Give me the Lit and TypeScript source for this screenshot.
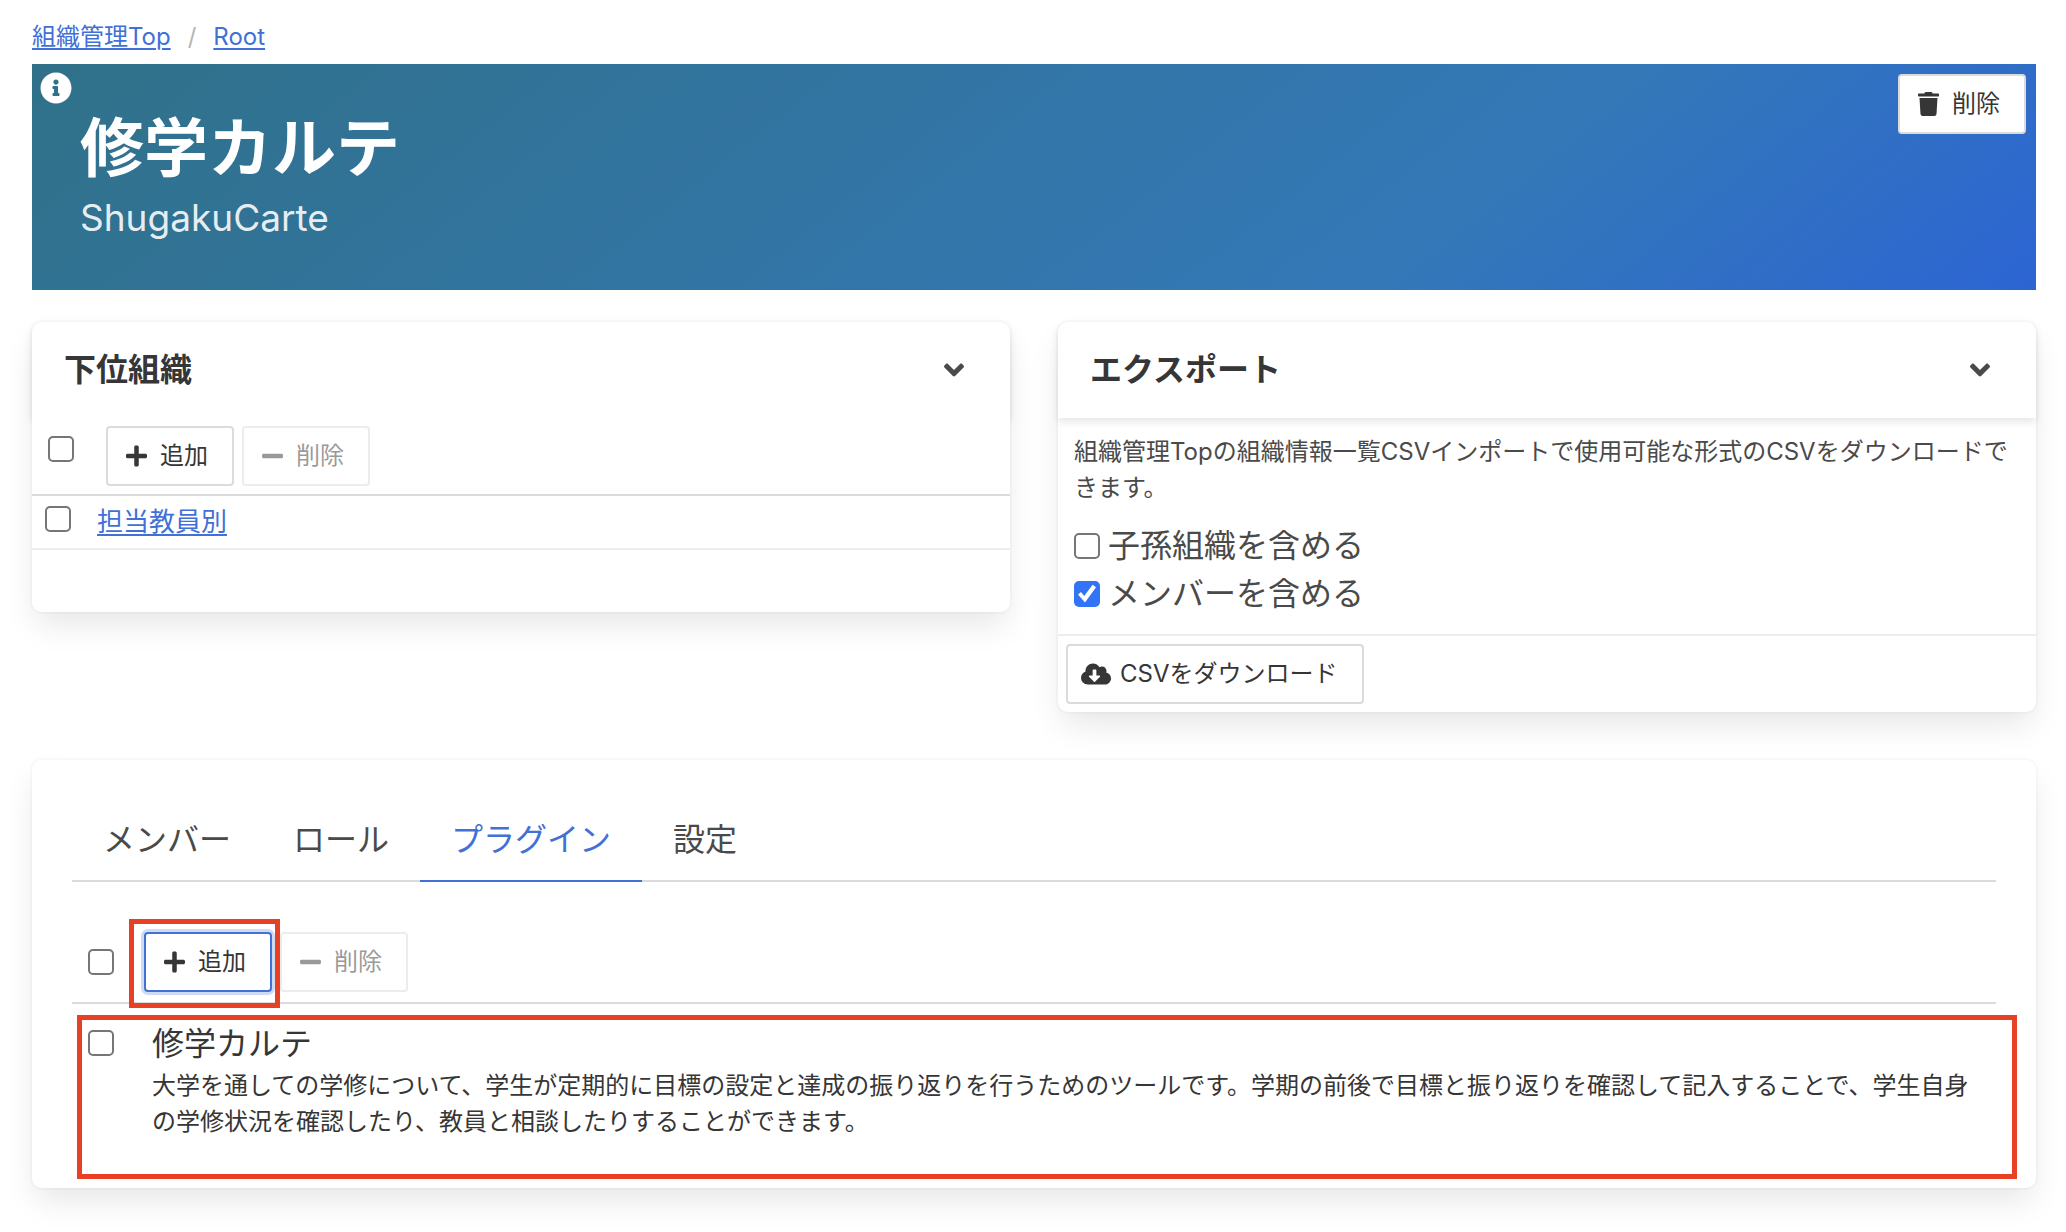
import { LitElement, html, css, svg } from "lit";
import { customElement, property, state } from "lit/decorators.js";
import { classMap } from "lit/directives/class-map.js";

const ICONS: Record<string, { width: number; path: string }> = {
  plus: {
    width: 448,
    path: "M416 208H272V64c0-17.67-14.33-32-32-32h-32c-17.67 0-32 14.33-32 32v144H32c-17.67 0-32 14.33-32 32v32c0 17.67 14.33 32 32 32h144v144c0 17.67 14.33 32 32 32h32c17.67 0 32-14.33 32-32V304h144c17.67 0 32-14.33 32-32v-32c0-17.67-14.33-32-32-32z",
  },
  minus: {
    width: 448,
    path: "M416 208H32c-17.67 0-32 14.33-32 32v32c0 17.67 14.33 32 32 32h384c17.67 0 32-14.33 32-32v-32c0-17.67-14.33-32-32-32z",
  },
  trash: {
    width: 448,
    path: "M432 32H312l-9.4-18.7A24 24 0 0 0 281.1 0H166.8a23.72 23.72 0 0 0-21.4 13.3L136 32H16A16 16 0 0 0 0 48v32a16 16 0 0 0 16 16h416a16 16 0 0 0 16-16V48a16 16 0 0 0-16-16zM32 128l21.2 339a48 48 0 0 0 47.9 45h245.8a48 48 0 0 0 47.9-45L416 128z",
  },
  info: {
    width: 512,
    path: "M256 8C119.043 8 8 119.083 8 256c0 136.997 111.043 248 248 248s248-111.003 248-248C504 119.083 392.957 8 256 8zm0 110c23.196 0 42 18.804 42 42s-18.804 42-42 42-42-18.804-42-42 18.804-42 42-42zm56 254c0 6.627-5.373 12-12 12h-88c-6.627 0-12-5.373-12-12v-24c0-6.627 5.373-12 12-12h12v-64h-12c-6.627 0-12-5.373-12-12v-24c0-6.627 5.373-12 12-12h64c6.627 0 12 5.373 12 12v100h12c6.627 0 12 5.373 12 12v24z",
  },
  download: {
    width: 640,
    path: "M537.6 226.6c4.1-10.7 6.4-22.4 6.4-34.6 0-53-43-96-96-96-19.7 0-38.1 6-53.3 16.2C367 64.2 315.3 32 256 32c-88.4 0-160 71.6-160 160 0 2.7.1 5.4.2 8.1C40.2 219.8 0 273.2 0 336c0 79.5 64.5 144 144 144h368c70.7 0 128-57.3 128-128 0-61.9-44-113.6-102.4-125.4zm-132.9 88.7L299.3 420.7c-6.2 6.2-16.4 6.2-22.6 0L171.3 315.3c-10.1-10.1-2.9-27.3 11.3-27.3H248V176c0-8.8 7.2-16 16-16h48c8.8 0 16 7.2 16 16v112h65.4c14.2 0 21.4 17.2 11.3 27.3z",
  },
  angle: {
    width: 320,
    path: "M143 352.3L7 216.3c-9.4-9.4-9.4-24.6 0-33.9l22.6-22.6c9.4-9.4 24.6-9.4 33.9 0l96.4 96.4 96.4-96.4c9.4-9.4 24.6-9.4 33.9 0l22.6 22.6c9.4 9.4 9.4 24.6 0 33.9l-136 136c-9.2 9.4-24.4 9.4-33.8 0z",
  },
};

@customElement("fa-icon")
export class FaIcon extends LitElement {
  @property() name = "plus";

  static styles = css`
    :host {
      display: inline-flex;
      align-items: center;
      justify-content: center;
      height: 24px;
    }
    .glyph {
      display: block;
      height: 100%;
      fill: currentColor;
    }
  `;

  render() {
    const icon = ICONS[this.name];
    return html`<svg class="glyph" viewBox="0 0 ${icon.width} 512" aria-hidden="true">
      ${svg`<path d=${icon.path}></path>`}
    </svg>`;
  }
}

@customElement("app-root")
export class AppRoot extends LitElement {
  @state() private activeTab = "プラグイン";

  private tabs = ["メンバー", "ロール", "プラグイン", "設定"];

  static styles = css`
    :host {
      display: block;
      color: #4a4a4a;
      font-family: Inter, "Noto Sans CJK JP", sans-serif;
      font-size: 24px;
      line-height: 36px;
    }
    *,
    *::before {
      box-sizing: border-box;
    }
    h1, h2, h3, p, ul, ol {
      margin: 0;
      padding: 0;
    }
    ul, ol {
      list-style: none;
    }
    a {
      color: #4170d6;
      text-decoration-thickness: 2px;
      text-underline-offset: 3px;
    }
    .page {
      padding: 0 30px 44px 32px;
    }

    .breadcrumb {
      display: flex;
      padding: 19px 0 9px;
    }
    .crumb + .crumb::before {
      content: "/";
      padding: 0 17px;
      color: #b5b5b5;
    }

    .banner {
      display: flex;
      justify-content: space-between;
      align-items: flex-start;
      min-height: 226px;
      padding: 8px 10px 8px 8px;
      background: linear-gradient(141deg, #307189 0%, #3478b8 71%, #2c65d3 100%);
      color: #fff;
    }
    .info {
      display: flex;
      width: 32px;
    }
    .info-icon {
      height: 32px;
    }
    .banner-text {
      flex: 1;
      padding: 40px 8px 0;
    }
    .banner-title {
      font-size: 64px;
      line-height: 72px;
      font-weight: 700;
    }
    .banner-sub {
      font-size: 37px;
      line-height: 48px;
      padding-top: 10px;
      color: rgba(255, 255, 255, 0.9);
    }
    .banner-action {
      padding-top: 2px;
    }

    .button {
      display: inline-flex;
      align-items: center;
      gap: 6px;
      height: 60px;
      padding: 0 24px 0 10px;
      border: 2px solid #dbdbdb;
      border-radius: 4px;
      background: #fff;
      color: #363636;
      font: inherit;
      white-space: nowrap;
      cursor: pointer;
    }
    .button:disabled {
      opacity: 0.5;
      cursor: not-allowed;
    }
    .button.focused {
      border-color: #4170d6;
      box-shadow: 0 0 0 3px rgba(65, 112, 214, 0.25);
    }
    .button-icon {
      width: 36px;
    }

    .check {
      appearance: none;
      flex: none;
      display: grid;
      place-items: center;
      width: 26px;
      height: 26px;
      margin: 0;
      border: 2px solid #767676;
      border-radius: 5px;
      background: #fff;
    }
    .check:checked {
      border-color: #3174f6;
      background: #3174f6;
    }
    .check:checked::before {
      content: "";
      width: 20px;
      height: 20px;
      background: #fff;
      clip-path: polygon(5% 52%, 20% 40%, 36% 60%, 78% 4%, 95% 16%, 40% 92%);
    }

    .columns {
      display: grid;
      grid-template-columns: 1fr 1fr;
      align-items: start;
      gap: 48px;
      padding: 32px 0 48px;
    }
    .card {
      border-radius: 10px;
      background: #fff;
      box-shadow: 0 16px 32px -4px rgba(10, 10, 10, 0.1), 0 0 0 2px rgba(10, 10, 10, 0.02);
    }
    .card-head {
      display: flex;
      align-items: center;
      justify-content: space-between;
      height: 96px;
      padding: 0 32px;
      border-radius: 10px 10px 0 0;
      box-shadow: 0 4px 8px rgba(10, 10, 10, 0.1);
    }
    .card-title {
      color: #363636;
      font-size: 32px;
      line-height: 48px;
      font-weight: 700;
    }
    .toggle {
      display: grid;
      place-items: center;
      width: 48px;
      height: 48px;
      padding: 0;
      border: 0;
      background: none;
      color: #4a4a4a;
    }
    .toggle-icon {
      height: 32px;
    }

    .children {
      position: relative;
      min-height: 194px;
      border-radius: 0 0 10px 10px;
      background: #fff;
    }
    .toolbar {
      display: flex;
      align-items: center;
      gap: 8px;
      border-bottom: 2px solid #dbdbdb;
    }
    .children-toolbar {
      align-items: flex-start;
      padding: 8px 16px;
    }
    .toolbar-check {
      display: flex;
      width: 50px;
    }
    .children-toolbar .toolbar-check {
      padding-top: 10px;
    }
    .child {
      display: flex;
      gap: 26px;
      padding: 8px 13px;
      border-bottom: 2px solid #ededed;
      font-size: 26px;
    }
    .child-check {
      padding-top: 2px;
      line-height: 0;
    }

    .export-body {
      padding: 16px;
    }
    .options {
      padding-top: 16px;
      font-size: 32px;
      line-height: 48px;
    }
    .option {
      display: flex;
      align-items: center;
      gap: 8px;
    }
    .export-foot {
      display: flex;
      padding: 8px;
      border-top: 2px solid #ededed;
    }

    .main-card {
      padding: 40px;
    }
    .tabs {
      display: flex;
      border-bottom: 2px solid #dbdbdb;
    }
    .tab {
      height: 82px;
      margin-bottom: -2px;
      padding: 0 31px;
      border: 0;
      border-bottom: 2px solid transparent;
      background: none;
      color: #4a4a4a;
      font: inherit;
      font-size: 32px;
      cursor: pointer;
    }
    .tab.active {
      border-bottom-color: #4170d6;
      color: #4170d6;
    }
    .plugin-toolbar {
      padding: 50px 16px 10px;
    }
    .plugin-toolbar .toolbar-check {
      width: 48px;
    }
    .marked {
      position: relative;
      z-index: 1;
      display: flex;
    }
    .marker {
      position: absolute;
      border: 5px solid #e83f25;
      pointer-events: none;
    }
    .marker-button {
      inset: -13px -8px -16px -15px;
    }
    .marker-row {
      inset: 11px -21px -31px 5px;
    }
    .plugin {
      position: relative;
      display: flex;
      gap: 38px;
      padding: 16px 16px 8px;
      color: #363636;
    }
    .plugin-check {
      padding-top: 10px;
      line-height: 0;
    }
    .plugin-name {
      font-size: 32px;
      line-height: 48px;
      font-weight: 400;
    }
  `;

  private addButton(focused = false) {
    return html`<button class=${classMap({ button: true, focused })} type="button">
      <fa-icon class="button-icon" name="plus"></fa-icon>追加
    </button>`;
  }

  private removeButton() {
    return html`<button class="button" type="button" disabled>
      <fa-icon class="button-icon" name="minus"></fa-icon>削除
    </button>`;
  }

  private cardHead(title: string) {
    return html`<header class="card-head">
      <h2 class="card-title">${title}</h2>
      <button class="toggle" type="button" aria-label=${title}>
        <fa-icon class="toggle-icon" name="angle"></fa-icon>
      </button>
    </header>`;
  }

  render() {
    return html`
      <div class="page">
        <nav>
          <ol class="breadcrumb">
            <li class="crumb"><a href="#top">組織管理Top</a></li>
            <li class="crumb"><a href="#root">Root</a></li>
          </ol>
        </nav>

        <header class="banner">
          <div class="info"><fa-icon class="info-icon" name="info"></fa-icon></div>
          <div class="banner-text">
            <h1 class="banner-title">修学カルテ</h1>
            <p class="banner-sub">ShugakuCarte</p>
          </div>
          <div class="banner-action">
            <button class="button" type="button">
              <fa-icon class="button-icon" name="trash"></fa-icon>削除
            </button>
          </div>
        </header>

        <div class="columns">
          <section class="card">
            ${this.cardHead("下位組織")}
            <div class="children">
              <div class="toolbar children-toolbar">
                <div class="toolbar-check">
                  <input class="check" type="checkbox" aria-label="下位組織" />
                </div>
                ${this.addButton()} ${this.removeButton()}
              </div>
              <ul>
                <li class="child">
                  <div class="child-check">
                    <input class="check" type="checkbox" aria-label="担当教員別" />
                  </div>
                  <a href="#child">担当教員別</a>
                </li>
              </ul>
            </div>
          </section>

          <section class="card">
            ${this.cardHead("エクスポート")}
            <div class="export-body">
              <p>組織管理Topの組織情報一覧CSVインポートで使用可能な形式のCSVをダウンロードできます。</p>
              <div class="options">
                <label class="option"><input class="check" type="checkbox" />子孫組織を含める</label>
                <label class="option"><input class="check" type="checkbox" checked />メンバーを含める</label>
              </div>
            </div>
            <footer class="export-foot">
              <button class="button" type="button">
                <fa-icon class="button-icon" name="download"></fa-icon>CSVをダウンロード
              </button>
            </footer>
          </section>
        </div>

        <section class="card main-card">
          <div class="tabs" role="tablist">
            ${this.tabs.map(
              (tab) => html`<button
                class=${classMap({ tab: true, active: tab === this.activeTab })}
                type="button"
                role="tab"
                aria-selected=${tab === this.activeTab}
                @click=${() => (this.activeTab = tab)}
              >${tab}</button>`
            )}
          </div>
          <div class="toolbar plugin-toolbar">
            <div class="toolbar-check">
              <input class="check" type="checkbox" aria-label="プラグイン" />
            </div>
            <div class="marked">
              ${this.addButton(true)}
              <div class="marker marker-button"></div>
            </div>
            ${this.removeButton()}
          </div>
          <ul>
            <li class="plugin">
              <div class="plugin-check">
                <input class="check" id="plugin-carte" type="checkbox" />
              </div>
              <div>
                <h3 class="plugin-name"><label for="plugin-carte">修学カルテ</label></h3>
                <p>大学を通しての学修について、学生が定期的に目標の設定と達成の振り返りを行うためのツールです。学期の前後で目標と振り返りを確認して記入することで、学生自身の学修状況を確認したり、教員と相談したりすることができます。</p>
              </div>
              <div class="marker marker-row"></div>
            </li>
          </ul>
        </section>
      </div>
    `;
  }
}
